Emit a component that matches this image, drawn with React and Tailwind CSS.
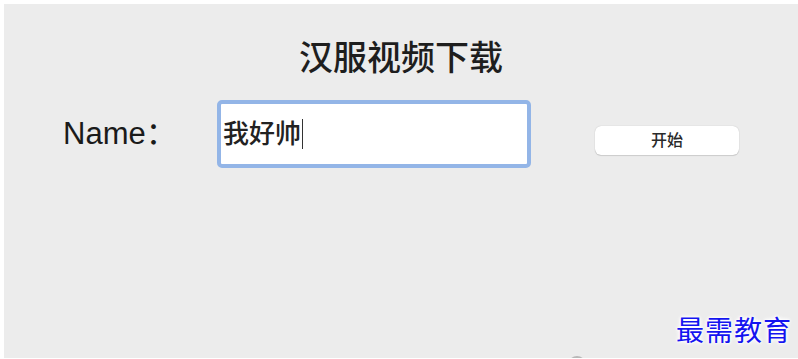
import React from "react";

const font = {
  fontFamily: '"Liberation Sans", "Noto Sans CJK SC", sans-serif',
};

const App = () => {
  return (
    <div className="w-[798px] h-[359px] bg-white pl-1 pt-1 pb-px" style={font}>
      <div className="relative h-full bg-[#ececec] flex flex-col overflow-hidden">
        <div className="mt-[34px] h-[40px] leading-[40px] text-center text-[34px] font-medium text-[#1e1e1e]">
          汉服视频下载
        </div>

        <div className="mt-[22px] ml-[59px] flex items-start">
          <div className="w-[154px] h-[68px] flex items-center text-[31px] text-[#1a1a1a]">
            Name：
          </div>
          <div className="w-[314px] h-[68px] rounded-[5px] border-4 border-[#93b5e7] bg-white flex items-center pl-[2px]">
            <span className="text-[26px] font-medium text-[#222] leading-none">我好帅</span>
            <span className="ml-px w-px h-[30px] bg-[#333]" />
          </div>
          <button className="ml-[64px] mt-[26px] w-[144px] h-[29px] rounded-[6px] bg-white text-[16px] font-medium text-[#2a2a2a] shadow-[0_0_1px_rgba(0,0,0,0.25),0_1px_1px_rgba(0,0,0,0.12)]">
            开始
          </button>
        </div>

        {/* watermark */}
        <div className="absolute right-[6px] bottom-[12px] text-[28px] leading-none tracking-[1px] text-[#1414f0] [text-shadow:0_0_2px_#fff,0_0_3px_#fff,0_0_4px_#fff,0_0_5px_#fff]">
          最需教育
        </div>
        <div className="absolute left-[564px] bottom-[-16px] w-[18px] h-[18px] rounded-full bg-[#b8b8b8]" />
      </div>
    </div>
  );
};

export default App;
